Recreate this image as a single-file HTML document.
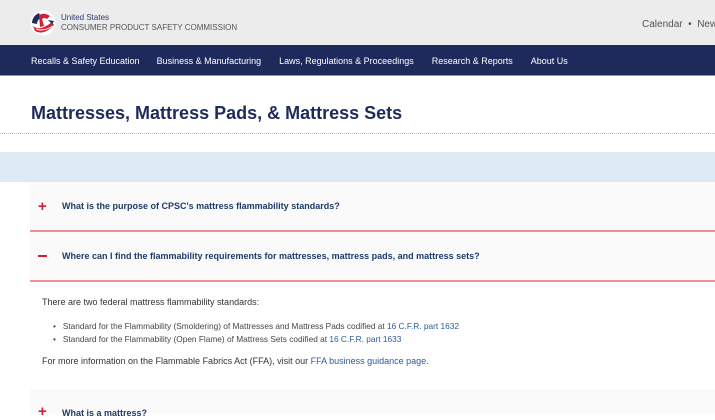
<!DOCTYPE html>
<html><head><style>
*{margin:0;padding:0;box-sizing:border-box}
body{width:715px;height:414px;overflow:hidden;background:#fff;font-family:"Liberation Sans",sans-serif;position:relative}
.a{position:absolute}
</style></head><body>
<div class="a" style="left:0;top:0;width:715px;height:45px;background:#ececec"></div>
<svg class="a" style="left:30px;top:10px" width="26" height="26" viewBox="0 0 26 26">
<circle cx="13" cy="13" r="12.5" fill="#fff"/>
<path d="M2 13 A11 11 0 0 1 9 3 L11 8 A6 6 0 0 0 7 14Z" fill="#1f2a5c"/>
<path d="M9 5 Q14 2 20 6 L17 9 Q14 7 12 9 L14 16 L10 17Z" fill="#d21f32"/>
<path d="M3 16 Q10 22 22 12 L24 15 Q14 26 5 21Z" fill="#d21f32"/>
<path d="M6 19 Q13 22 23 16" stroke="#fff" stroke-width="1" fill="none"/>
<path d="M18 10 L24 11 L22 14Z" fill="#1f2a5c"/>
</svg>
<div class="a" style="left:61px;top:13px;font-size:8px;color:#2a3a6a;line-height:10px">United States<br><span style="color:#555">CONSUMER PRODUCT SAFETY COMMISSION</span></div>
<div class="a" style="left:642px;top:19px;font-size:10px;color:#555;white-space:nowrap">Calendar &nbsp;•&nbsp; News</div>
<div class="a" style="left:0;top:45px;width:715px;height:31px;background:#1f2a5c;border-bottom:1px solid #8a93b0"></div>
<div class="a" style="left:31px;top:56px;font-size:9px;color:#fff;white-space:nowrap">
<span>Recalls &amp; Safety Education</span><span style="margin-left:17px">Business &amp; Manufacturing</span><span style="margin-left:18px">Laws, Regulations &amp; Proceedings</span><span style="margin-left:18px">Research &amp; Reports</span><span style="margin-left:18px">About Us</span></div>
<div class="a" style="left:31px;top:103px;font-size:18px;font-weight:bold;color:#1f2a5c;white-space:nowrap">Mattresses, Mattress Pads, &amp; Mattress Sets</div>
<div class="a" style="left:0;top:133px;width:715px;border-top:1px dotted #f2b650"></div>
<div class="a" style="left:0;top:152px;width:715px;height:30px;background:#dde9f3"></div>
<div class="a" style="left:30px;top:182px;width:685px;height:50px;background:#fafafa;border-bottom:2px solid #e8939b"></div>
<div class="a" style="left:38px;top:198px;font-size:15px;font-weight:bold;color:#d21f32">+</div>
<div class="a" style="left:62px;top:201px;font-size:9px;font-weight:bold;color:#1f3a6a;white-space:nowrap">What is the purpose of CPSC's mattress flammability standards?</div>
<div class="a" style="left:30px;top:232px;width:685px;height:50px;background:#fafafa;border-bottom:2px solid #e8939b"></div>
<div class="a" style="left:38px;top:255px;width:9px;height:2px;background:#d21f32"></div>
<div class="a" style="left:62px;top:251px;font-size:9px;font-weight:bold;color:#1f3a6a;white-space:nowrap">Where can I find the flammability requirements for mattresses, mattress pads, and mattress sets?</div>
<div class="a" style="left:42px;top:297px;font-size:9px;color:#333;white-space:nowrap">There are two federal mattress flammability standards:</div>
<div class="a" style="left:53px;top:320px;font-size:8.3px;color:#444;white-space:nowrap;line-height:13px">•&nbsp;&nbsp; Standard for the Flammability (Smoldering) of Mattresses and Mattress Pads codified at <span style="color:#2a5a9a">16 C.F.R. part 1632</span><br>•&nbsp;&nbsp; Standard for the Flammability (Open Flame) of Mattress Sets codified at <span style="color:#2a5a9a">16 C.F.R. part 1633</span></div>
<div class="a" style="left:42px;top:356px;font-size:9px;color:#333;white-space:nowrap">For more information on the Flammable Fabrics Act (FFA), visit our <span style="color:#2a5a9a">FFA business guidance page.</span></div>
<div class="a" style="left:30px;top:389px;width:685px;height:25px;background:#fafafa"></div>
<div class="a" style="left:38px;top:403px;font-size:15px;font-weight:bold;color:#d21f32">+</div>
<div class="a" style="left:62px;top:408px;font-size:9px;font-weight:bold;color:#1f3a6a;white-space:nowrap">What is a mattress?</div>
</body></html>
